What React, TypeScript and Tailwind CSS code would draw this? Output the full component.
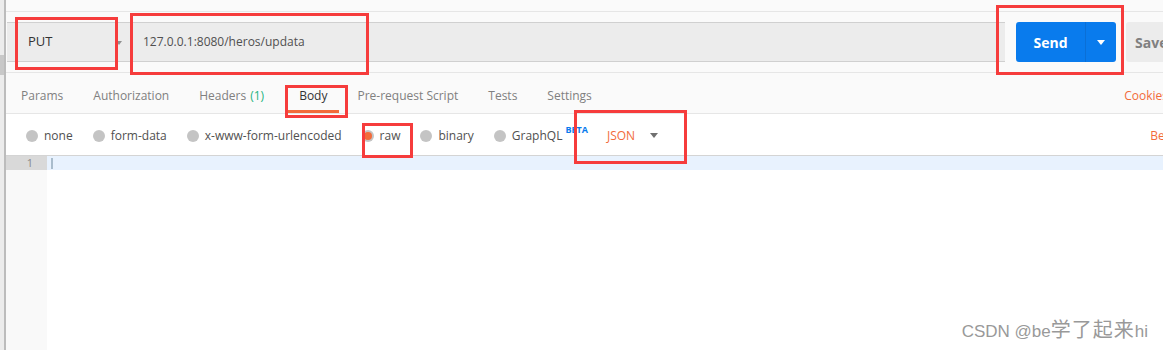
import React from "react";

const tabs = [
  { label: "Params" },
  { label: "Authorization" },
  { label: "Headers", count: "(1)" },
  { label: "Body", active: true },
  { label: "Pre-request Script" },
  { label: "Tests" },
  { label: "Settings" },
];

const bodyModes = [
  { label: "none" },
  { label: "form-data" },
  { label: "x-www-form-urlencoded" },
  { label: "raw", selected: true },
  { label: "binary" },
  { label: "GraphQL", beta: true },
];

function Radio({ label, selected, beta }: { label: string; selected?: boolean; beta?: boolean }) {
  return (
    <div className="mr-[20px] flex shrink-0 items-center">
      <span className="flex h-[12px] w-[12px] items-center justify-center rounded-full bg-[#c4c4c4]">
        {selected ? <span className="h-[8px] w-[8px] rounded-full bg-[#f26b3a]" /> : null}
      </span>
      <span className="ml-[6px] text-[12px] text-[#505050]">{label}</span>
      {beta ? (
        <span className="-mt-[12px] ml-[3px] text-[9px] font-bold text-[#097bed]">BETA</span>
      ) : null}
    </div>
  );
}

function Mark({ className }: { className: string }) {
  return <div className={`pointer-events-none absolute border-[3px] border-[#f63c3c] ${className}`} />;
}

export default function App() {
  return (
    <div
      className="relative flex h-[350px] w-[1163px] overflow-hidden bg-white"
      style={{ fontFamily: '"Open Sans", "Noto Sans", sans-serif' }}
    >
      {/* left rail */}
      <div className="flex w-[6px] shrink-0 flex-col border-r-[2px] border-[#bcbcbc] bg-[#ececec]">
        <div className="mt-[55px] h-[20px] w-[4px] bg-[#c8c8c8]" />
      </div>

      <div className="flex min-w-0 flex-1 flex-col overflow-hidden">
        {/* request bar */}
        <div className="h-[73px] shrink-0 bg-[#fafafa]">
          <div className="h-[12px] border-b border-[#e6e6e6]" />
          <div className="mt-[10px] flex h-[40px] items-stretch pl-[1px]">
            <div className="flex w-[998px] shrink-0 items-stretch border-y border-[#d0d0d0] bg-[#ececec]">
              <div className="flex w-[121px] items-center justify-between pl-[21px] pr-[6px]">
                <span className="text-[13px] text-[#333]">PUT</span>
                <span className="mt-[1px] border-x-[3.5px] border-t-[4px] border-x-transparent border-t-[#909090]" />
              </div>
              <div className="flex flex-1 items-center pl-[15px] text-[12px] text-[#505050]">
                127.0.0.1:8080/heros/updata
              </div>
            </div>
            <div className="ml-[11px] flex w-[100px] shrink-0 overflow-hidden rounded-[3px] bg-[#097bed]">
              <div className="flex w-[69px] items-center justify-center text-[14px] font-bold text-white">
                Send
              </div>
              <div className="flex flex-1 items-center justify-center border-l border-[#0a6fd6]">
                <span className="border-x-[4px] border-t-[5px] border-x-transparent border-t-white" />
              </div>
            </div>
            <div className="ml-[10px] flex w-[80px] shrink-0 items-center rounded-[3px] bg-[#ececec] pl-[9px] text-[14px] font-bold text-[#808080]">
              Save
            </div>
          </div>
          <div className="mt-[10px] border-b border-[#e6e6e6]" />
        </div>

        {/* tabs */}
        <div className="flex h-[41px] shrink-0 items-stretch border-b border-[#e6e6e6] bg-[#fafafa] pl-[3px]">
          {tabs.map((t) => (
            <div
              key={t.label}
              className={`mr-[6px] flex shrink-0 items-center px-[12px] pt-[9px] text-[12px] ${
                t.active
                  ? "ml-[5px] border-b-[3px] border-[#f26b3a] text-[#333]"
                  : "border-b-[3px] border-transparent text-[#808080]"
              }`}
            >
              {t.label}
              {t.count ? <span className="ml-[4px] text-[#26b47f]">{t.count}</span> : null}
            </div>
          ))}
          <div className="ml-auto mr-[-5px] flex shrink-0 items-center pt-[6px] text-[12px] text-[#f26b3a]">
            Cookies
          </div>
        </div>

        {/* body modes */}
        <div className="flex h-[42px] shrink-0 items-center border-b border-[#d4d4d4] pl-[20px] pt-[2px]">
          {bodyModes.map((m) => (
            <Radio key={m.label} label={m.label} selected={m.selected} beta={m.beta} />
          ))}
          <div className="ml-[-1px] flex shrink-0 items-center">
            <span className="text-[12px] text-[#f26b3a]">JSON</span>
            <span className="ml-[15px] border-x-[4px] border-t-[5px] border-x-transparent border-t-[#707070]" />
          </div>
          <div className="ml-auto mr-[-33px] shrink-0 text-[12px] text-[#f26b3a]">Beautify</div>
        </div>

        {/* editor */}
        <div className="flex flex-1">
          <div className="flex w-[41px] shrink-0 flex-col bg-[#f9f9f9]">
            <div className="flex h-[14px] items-center justify-end bg-[#d9d9d9] pr-[14px] text-[11px] text-[#888]">
              1
            </div>
          </div>
          <div className="relative flex-1">
            <div className="flex h-[14px] items-center bg-[#e8f2fe] pl-[4px]">
              <span className="h-[11px] w-[2px] bg-[#a9bccc]" />
            </div>
            <div
              className="absolute bottom-[6px] right-[15px] flex items-baseline text-[17px] text-[#999]"
              style={{ fontFamily: '"Liberation Sans", "Noto Sans CJK SC", sans-serif' }}
            >
              CSDN @be<span className="text-[20px] leading-none tracking-[1px]">学了起来</span>hi
            </div>
          </div>
        </div>
      </div>

      {/* annotation boxes */}
      <Mark className="left-[15px] top-[17px] h-[53px] w-[103px]" />
      <Mark className="left-[130px] top-[13px] h-[62px] w-[239px]" />
      <Mark className="left-[996px] top-[5px] h-[70px] w-[128px]" />
      <Mark className="left-[285px] top-[85px] h-[33px] w-[63px]" />
      <Mark className="left-[362px] top-[123px] h-[35px] w-[51px]" />
      <Mark className="left-[574px] top-[110px] h-[54px] w-[113px]" />
    </div>
  );
}
